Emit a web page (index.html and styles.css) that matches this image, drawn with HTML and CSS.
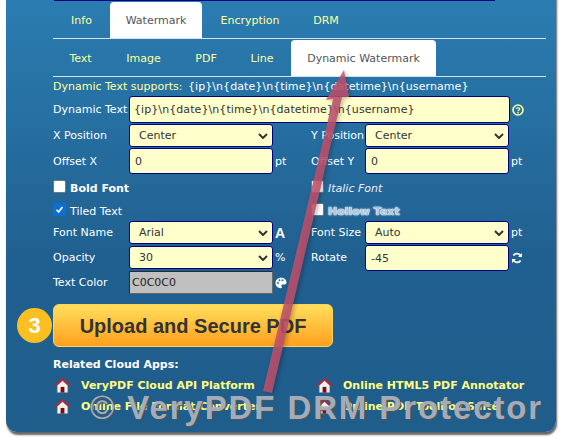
FILE: index.html
```html
<!DOCTYPE html>
<html lang="en">
<head>
<meta charset="utf-8">
<title>Dynamic Watermark</title>
<link rel="stylesheet" href="styles.css">
</head>
<body>
<main class="panel">
  <div class="topbar"></div>
  <nav class="tabs main-tabs">
    <a class="tab t-info">Info</a>
    <a class="tab active t-wm">Watermark</a>
    <a class="tab t-enc">Encryption</a>
    <a class="tab t-drm">DRM</a>
  </nav>
  <nav class="tabs sub-tabs">
    <a class="tab s-text">Text</a>
    <a class="tab s-image">Image</a>
    <a class="tab s-pdf">PDF</a>
    <a class="tab s-line">Line</a>
    <a class="tab active s-dyn">Dynamic Watermark</a>
  </nav>
  <p class="supports"><span class="hl">Dynamic Text supports:</span> <span class="tokens">{ip}\n{date}\n{time}\n{datetime}\n{username}</span></p>

  <div class="dyn-row">
    <label class="lbl">Dynamic Text</label>
    <div class="field wide">{ip}\n{date}\n{time}\n{datetime}\n{username}</div>
    <svg class="help" viewBox="0 0 12 12" width="12" height="12"><circle cx="6" cy="6" r="5" fill="none" stroke="#ffff9e" stroke-width="1.6"/><path d="M4.2 4.8C4.3 3.5 7.8 3.4 7.8 5 7.8 6.1 6 6 6 7.3" fill="none" stroke="#ffff9e" stroke-width="1.3"/><rect x="5.3" y="8" width="1.4" height="1.4" fill="#ffff9e"/></svg>
  </div>

  <div class="grid g1">
    <label class="lbl">X Position</label>
    <div class="field sel">Center<svg class="chev" viewBox="0 0 10 6"><path d="M1 1l4 4 4-4" fill="none" stroke="#333" stroke-width="2"/></svg></div>
    <span></span>
    <label class="lbl">Y Position</label>
    <div class="field sel">Center<svg class="chev" viewBox="0 0 10 6"><path d="M1 1l4 4 4-4" fill="none" stroke="#333" stroke-width="2"/></svg></div>
    <span></span>
    <label class="lbl">Offset X</label>
    <div class="field tall">0</div>
    <span class="unit">pt</span>
    <label class="lbl">Offset Y</label>
    <div class="field tall">0</div>
    <span class="unit">pt</span>
  </div>

  <div class="checks c1">
    <div class="check"><span class="box"></span><b class="bold">Bold Font</b></div>
    <div class="check"><span class="box"></span><i class="ital">Italic Font</i></div>
  </div>
  <div class="checks c2">
    <div class="check"><span class="box on"><svg viewBox="0 0 13 13"><path d="M3 6.800l2.500 2.600L10 3.600" fill="none" stroke="#fff" stroke-width="2"/></svg></span><span class="plain">Tiled Text</span></div>
    <div class="check"><span class="box"></span><b class="hollow">Hollow Text</b></div>
  </div>

  <div class="grid g2">
    <label class="lbl">Font Name</label>
    <div class="field sel">Arial<svg class="chev" viewBox="0 0 10 6"><path d="M1 1l4 4 4-4" fill="none" stroke="#333" stroke-width="2"/></svg></div>
    <span class="unit big-a">A</span>
    <label class="lbl">Font Size</label>
    <div class="field sel">Auto<svg class="chev" viewBox="0 0 10 6"><path d="M1 1l4 4 4-4" fill="none" stroke="#333" stroke-width="2"/></svg></div>
    <span class="unit">pt</span>
    <label class="lbl">Opacity</label>
    <div class="field sel">30<svg class="chev" viewBox="0 0 10 6"><path d="M1 1l4 4 4-4" fill="none" stroke="#333" stroke-width="2"/></svg></div>
    <span class="unit">%</span>
    <label class="lbl">Rotate</label>
    <div class="field rot">-45</div>
    <svg class="unit-icon" viewBox="0 0 12 12" width="12" height="12"><path d="M10 4.500A4.300 4.300 0 0 0 2.400 3.600M2 7.500a4.300 4.300 0 0 0 7.600.9" fill="none" stroke="#fff" stroke-width="1.800"/><path d="M11 1v4H7zM1 11V7h4z" fill="#fff"/></svg>
    <label class="lbl">Text Color</label>
    <div class="color">C0C0C0</div>
    <svg class="unit-icon" viewBox="0 0 12 12" width="12" height="12"><path d="M6 .8C2.800.8.500 3 .5 6s2.400 5.200 5 5.200c1.600 0 1.500-1.300 1-2-.4-.8.100-1.600 1-1.600h2c1.300 0 2-.8 2-2C11.500 2.800 9 .8 6 .8z" fill="#fff"/><circle cx="3" cy="6" r="1" fill="#2a6f9f"/><circle cx="4.500" cy="3.300" r="1" fill="#2a6f9f"/><circle cx="7.500" cy="3.200" r="1" fill="#2a6f9f"/></svg>
  </div>

  <div class="action">
    <span class="step">3</span>
    <button class="upload">Upload and Secure PDF</button>
  </div>

  <h2 class="related">Related Cloud Apps:</h2>
  <ul class="apps">
    <li><svg class="house" viewBox="0 0 18 16"><path d="M3.500 8V15.500H14.500V8L9 3z" fill="#f4f1ea" stroke="#999" stroke-width=".5"/><path d="M.8 8.500L9 1.200 17.200 8.500" fill="none" stroke="#c8202a" stroke-width="1.800"/><rect x="7" y="9.500" width="4" height="6" fill="#7d0c10"/></svg><a>VeryPDF Cloud API Platform</a></li>
    <li><svg class="house" viewBox="0 0 18 16"><path d="M3.500 8V15.500H14.500V8L9 3z" fill="#f4f1ea" stroke="#999" stroke-width=".5"/><path d="M.8 8.500L9 1.200 17.200 8.500" fill="none" stroke="#c8202a" stroke-width="1.800"/><rect x="7" y="9.500" width="4" height="6" fill="#7d0c10"/></svg><a>Online HTML5 PDF Annotator</a></li>
    <li><svg class="house" viewBox="0 0 18 16"><path d="M3.500 8V15.500H14.500V8L9 3z" fill="#f4f1ea" stroke="#999" stroke-width=".5"/><path d="M.8 8.500L9 1.200 17.200 8.500" fill="none" stroke="#c8202a" stroke-width="1.800"/><rect x="7" y="9.500" width="4" height="6" fill="#7d0c10"/></svg><a>Online File Format Converter</a></li>
    <li><svg class="house" viewBox="0 0 18 16"><path d="M3.500 8V15.500H14.500V8L9 3z" fill="#f4f1ea" stroke="#999" stroke-width=".5"/><path d="M.8 8.500L9 1.200 17.200 8.500" fill="none" stroke="#c8202a" stroke-width="1.800"/><rect x="7" y="9.500" width="4" height="6" fill="#7d0c10"/></svg><a>Online PDF Toolbox Suite</a></li>
  </ul>

  <svg class="arrow" viewBox="0 0 567 439" width="567" height="439"><path d="M263 391L333 99 326 100 344 70 349 97 342 97 272 393z" fill="#bf4f6c" fill-opacity=".86"/></svg>
  <div class="stamp"><span class="copy">©</span> VeryPDF DRM Protector</div>
</main>
</body>
</html>
```
FILE: styles.css
```css
* { box-sizing: border-box; }
html, body { margin: 0; padding: 0; background: #fff; height: 439px; overflow: hidden; }
body { font: 11px/13px "DejaVu Sans", Verdana, sans-serif; color: #fff; }

.panel {
  position: relative;
  width: 550px;
  height: 437px;
  margin: -5px 0 0 6px;
  padding: 5px 10px 0 47px;
  border-radius: 0 0 11px 11px;
  background: linear-gradient(#2b7db1, #206090 60%, #1f5d8b);
  box-shadow: 1px 3px 2px #666;
}
.topbar { position: absolute; left: 48px; top: 0; width: 441px; height: 6px; background: #000080; }

.tabs { position: relative; display: flex; height: 37px; border-bottom: 1px solid #d8e2ea; }
.main-tabs { margin-top: 2px; }
.sub-tabs { margin-top: 1px; }
.tab { display: flex; align-items: center; justify-content: center; height: 36px; color: #ffff9e; }
.tab.active { background: #fff; color: #555; border-radius: 4px 4px 0 0; }
.t-info { width: 57px; }
.t-wm { width: 92px; }
.t-enc { width: 96px; }
.t-drm { width: 56px; }
.s-text { width: 55px; }
.s-image { width: 71px; }
.s-pdf { width: 54px; }
.s-line { width: 58px; }
.s-dyn { width: 145px; }

.supports { margin: 2px 0 0; height: 16px; line-height: 16px; white-space: nowrap; }
.hl { color: #ffff9e; }
.tokens { margin-left: 2px; letter-spacing: .08px; }

.lbl { white-space: nowrap; }
.dyn-row { display: grid; grid-template-columns: 76px 381px 14px; align-items: center; margin-top: 1px; }
.help { margin-left: 2px; }

.field {
  position: relative;
  display: flex;
  align-items: center;
  height: 23px;
  padding-left: 5px;
  background: #ffffcc;
  border: 1px solid #000080;
  border-radius: 3px;
  color: #333;
  white-space: nowrap;
}
.wide { height: 27px; padding-left: 4px; letter-spacing: .08px; }
.tall { height: 26px; }
.sel { padding-left: 9px; }
.chev { position: absolute; right: 4px; top: 8px; width: 10px; height: 6px; }

.grid { display: grid; grid-template-columns: 76px 144px 38px 54px 144px 30px; align-items: center; }
.g1 { margin-top: 1px; row-gap: 1px; }
.g2 { margin-top: 4px; row-gap: 2px; }
.rot { height: 26px; margin: -1px 0 -2px; }
.unit { padding-left: 2px; }
.big-a { font: bold 14px/14px "Liberation Sans", sans-serif; }
.unit-icon { margin-left: 2px; }
.color {
  height: 23px;
  padding: 4px 0 0 2px;
  background: #c0c0c0;
  border: 1px solid;
  border-color: #2a2a2a #666 #666 #2a2a2a;
  color: #222;
}

.checks { display: grid; grid-template-columns: 258px 200px; }
.c1 { margin-top: 3px; height: 17px; }
.c2 { margin-top: 6px; height: 17px; }
.check { display: flex; align-items: center; gap: 4px; }
.box { width: 13px; height: 13px; background: #fff; border: 1px solid #777; border-radius: 2px; flex: none; }
.box.on { background: #0b6fd3; border-color: #0b6fd3; }
.box.on svg { display: block; width: 11px; height: 11px; }
.check > :last-child { margin-top: 5px; }
.ital { font-style: italic; color: #eef; }
.hollow { color: #a9c6dd; text-shadow: 0 0 1px #fff, 0 0 1px #fff, 0 0 2px #fff; }

.action { position: relative; margin-top: 10px; height: 43px; }
.step {
  position: absolute; left: -36px; top: 4px;
  width: 35px; height: 35px; border-radius: 50%;
  display: flex; align-items: center; justify-content: center;
  background: #fcbf22;
  font: bold 22px/1 "Liberation Sans", Arial, sans-serif;
  color: #fff;
}
.upload {
  display: block;
  width: 280px; height: 43px;
  border: 1px solid #ffd45a;
  border-radius: 6px;
  background: linear-gradient(#ffdf5c, #ff9f1e);
  color: #333;
  font: bold 20px/1 "Liberation Sans", Arial, sans-serif;
}

.related { margin: 11px 0 0; font: bold 11px/14px "DejaVu Sans", sans-serif; }
.apps { list-style: none; margin: 4px 0 0; padding: 0 0 0 1px; display: grid; grid-template-columns: 262px 1fr; row-gap: 3px; }
.apps li { display: flex; align-items: center; gap: 10px; height: 18px; white-space: nowrap; }
.house { width: 17px; height: 17px; flex: none; }
.apps a { color: #ffff80; font-weight: bold; }

.arrow { position: absolute; left: -6px; top: 5px; pointer-events: none; filter: blur(.7px) drop-shadow(2px 1px 2px rgba(0,0,0,.3)); }
.stamp {
  position: absolute; left: 84px; top: 394px;
  white-space: nowrap;
  font: bold 33px/38px "Liberation Sans", Arial, sans-serif;
  letter-spacing: 1.900px;
  color: rgba(178,184,196,.9);
  text-shadow: 1px 1px 1px #555;
}
.copy { font-weight: normal; }
```
